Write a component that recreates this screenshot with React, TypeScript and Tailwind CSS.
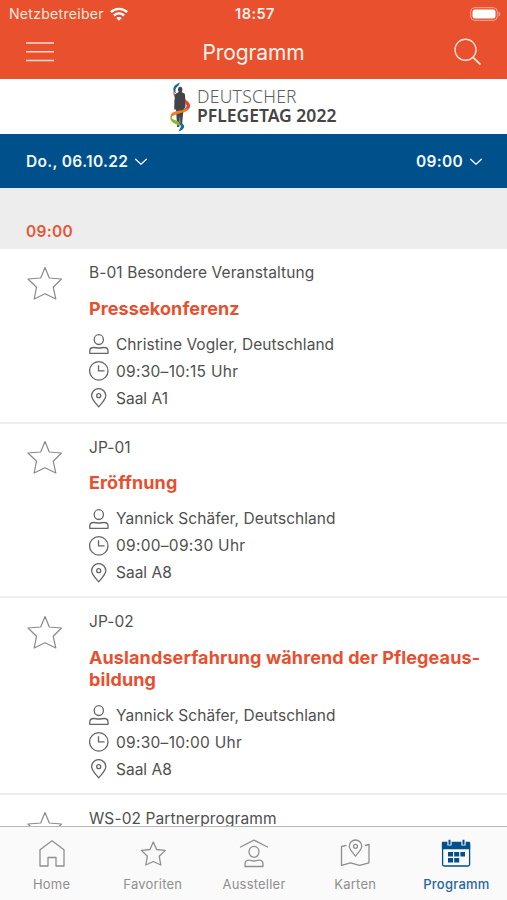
import type { ReactNode } from 'react'

interface Session {
  code: string
  title: string[]
  speaker?: string
  time?: string
  room?: string
}

const SESSIONS: Session[] = [
  {
    code: 'B-01 Besondere Veranstaltung',
    title: ['Pressekonferenz'],
    speaker: 'Christine Vogler, Deutschland',
    time: '09:30–10:15 Uhr',
    room: 'Saal A1'
  },
  {
    code: 'JP-01',
    title: ['Eröffnung'],
    speaker: 'Yannick Schäfer, Deutschland',
    time: '09:00–09:30 Uhr',
    room: 'Saal A8'
  },
  {
    code: 'JP-02',
    title: ['Auslandserfahrung während der Pflegeaus-', 'bildung'],
    speaker: 'Yannick Schäfer, Deutschland',
    time: '09:30–10:00 Uhr',
    room: 'Saal A8'
  },
  { code: 'WS-02 Partnerprogramm', title: [] }
]

function StarIcon() {
  return (
    <svg
      viewBox="0 0 37 37"
      fill="none"
      stroke="currentColor"
      strokeWidth="1.2"
      strokeLinejoin="round"
      className="mt-[3.5px] mr-[26px] size-[37px] shrink-0 text-[#8a8a8a]"
    >
      <path d="M19 2.5 23.3 13 35.5 14 27.2 22.2 29.8 34 19 28.8 8.2 34 10.5 22.2 2 14 14.7 13Z" />
    </svg>
  )
}

function PersonIcon() {
  return (
    <svg viewBox="0 0 20 20" fill="none" stroke="currentColor" strokeWidth="1.3" className="size-5 text-[#666]">
      <ellipse cx="9.8" cy="5.6" rx="4.6" ry="4.9" />
      <path
        d="M.8 19.3v-2.3c0-2.1 1.6-3.5 3.9-3.5 1.800 0 3.100.5 5.200.5s3.400-.5 5.200-.5c2.300 0 3.900 1.400 3.900 3.500v2.300Z"
        strokeLinejoin="round"
      />
    </svg>
  )
}

function ClockIcon() {
  return (
    <svg viewBox="0 0 20 20" fill="none" stroke="currentColor" strokeWidth="1.3" className="size-5 text-[#666]">
      <circle cx="9.8" cy="9.9" r="9.2" />
      <path d="M9.5 4.300V9.900h6" />
    </svg>
  )
}

function PinIcon() {
  return (
    <svg viewBox="0 0 20 20" fill="none" stroke="currentColor" strokeWidth="1.3" className="size-5 text-[#666]">
      <path d="M9.700 18.800C7.200 15.800 2.600 11.300 2.600 7.700a7.100 7.100 0 0 1 14.200 0C16.800 11.300 12.200 15.800 9.700 18.800Z" strokeLinejoin="round" />
      <circle cx="9.700" cy="7.700" r="2" />
    </svg>
  )
}

function Chevron() {
  return (
    <svg viewBox="0 0 12 8" fill="none" stroke="currentColor" strokeWidth="1.3" className="h-2 w-3">
      <path d="m.6 1.3 5.400 4.900 5.400-4.900" strokeLinecap="round" strokeLinejoin="round" />
    </svg>
  )
}

function Detail({ icon, children }: { icon: ReactNode; children: ReactNode }) {
  return (
    <div className="flex h-[27px] items-center gap-[7px]">
      {icon}
      {children}
    </div>
  )
}

function SessionRow({ session }: { session: Session }) {
  return (
    <li className="flex border-b-2 border-[#ededed] pt-3 pb-2.5 pl-[26px] text-[15.5px] text-[#505050]">
      <StarIcon />
      <div>
        <p className="leading-6 tracking-[.1px]">{session.code}</p>
        <h2 className="mt-[12.5px] mb-[11px] text-[18px] leading-[22px] font-bold tracking-[.11px] text-[#e84f2e]">
          {session.title.map((line) => (
            <span key={line} className="block whitespace-nowrap">
              {line}
            </span>
          ))}
        </h2>
        {session.speaker && (
          <Detail icon={<PersonIcon />}>
            <span className="tracking-[.05px]">{session.speaker}</span>
          </Detail>
        )}
        {session.time && (
          <Detail icon={<ClockIcon />}>
            <span className="tracking-[.28px]">{session.time}</span>
          </Detail>
        )}
        {session.room && (
          <Detail icon={<PinIcon />}>
            <span>{session.room}</span>
          </Detail>
        )}
      </div>
    </li>
  )
}

function Logo() {
  return (
    <div className="flex h-[55px] shrink-0 items-center bg-white pl-[168px]">
      <svg viewBox="0 0 24 52" fill="none" className="h-[52px] w-6">
        <path d="M6.500 11.500C3.800 7.500 6 3.800 12 1.500L10.200 5C7.300 7 7 9 8 12Z" fill="#1768a8" />
        <path d="M6.300 8.500c-.5 5 1.700 5.500 3.700 7.500l-1 2.500C6 16.500 4.300 12.500 6.300 8.500Z" fill="#df4937" />
        <ellipse cx="12.200" cy="8.600" rx="2.200" ry="2.900" fill="#424448" />
        <path d="M10.800 11h2.800l3.200 1.800.9 8.200-.5 6.500h-1.300l-.9 6-1 10.500H12.300L12 34l-.7 12H9.200L8.400 34l-.4-5.500H6.200l.2-9 .9-6.500Z" fill="#424448" />
        <path d="M17 18.500c4 2 6 5 4.700 8.200-.9 2-3 3-5 3.800l-1-2c3-1.500 4-3.500 1.300-6.500Z" fill="#e4472d" />
        <path d="M21.500 27c-2.500 5-12.500 5.300-16.700 8-1 .7-1.300 1.800-1 2.800-2-2-1.500-4.300.5-6 4.200-2.800 11.700-1.800 14.700-4.300Z" fill="#f07d22" />
        <path d="M3 34.500c0 4 4.200 4.500 8.200 6.500l2.800 3-3 .5C6 42.500.3 40 3 34.500Z" fill="#8bb52a" />
        <path d="M11.500 41c4.200 2 5.500 3.800 4.200 6-1.200 2-3 3-5.200 3.500l1.500-3c1.500-2 1-3.500-1-5.500Z" fill="#1668a8" />
      </svg>
      <div className="mb-px ml-[5px] flex flex-col font-['Noto_Sans','Open_Sans',sans-serif] text-[17.5px] leading-[19.5px] whitespace-nowrap">
        <span className="font-light tracking-[.28px] text-[#5d5d5d]">DEUTSCHER</span>
        <span className="font-semibold text-[#454545]">PFLEGETAG 2022</span>
      </div>
    </div>
  )
}

function Tab({ label, active = false, children }: { label: string; active?: boolean; children: ReactNode }) {
  return (
    <div className={active ? 'flex flex-1 flex-col items-center text-[#00508c]' : 'flex flex-1 flex-col items-center text-[#8f8f8f]'}>
      <svg viewBox="0 0 30 30" fill="none" stroke="currentColor" strokeWidth="1.3" strokeLinejoin="round" className="mt-3 size-[30px]">
        {children}
      </svg>
      <span
        className={
          active
            ? 'mt-[5px] text-[13px] leading-5 font-medium tracking-[.25px] text-[#2566a0]'
            : 'mt-[5px] text-[13px] leading-5 tracking-[.22px]'
        }
      >
        {label}
      </span>
    </div>
  )
}

function TabBar() {
  return (
    <nav className="flex h-[74px] shrink-0 border-t border-[#b8b8b8] bg-[#fafafa] pl-px">
      <Tab label="Home">
        <path d="M3 10.800 15 1.800l12 9V27h-8v-8.500h-8V27H3Z" />
      </Tab>
      <Tab label="Favoriten">
        <path d="m15.300 3 3.300 7.500 8.700.9-6.100 5.800 1.600 8.800-7.500-3.500-7.500 3.500 1.600-8.800-6.100-5.800 8.700-.9Z" />
      </Tab>
      <Tab label="Aussteller">
        <path d="M1.500 8 15 1.200 28.500 8" strokeLinecap="round" />
        <ellipse cx="15" cy="12.800" rx="5" ry="5.500" />
        <path d="M6 27.500v-2.300c0-2.500 1.500-4 4-4 2 0 3 .8 5 .8s3-.8 5-.8c2.500 0 4 1.500 4 4v2.300Z" />
      </Tab>
      <Tab label="Karten">
        <path d="M15.500 17C13.500 14.500 9.300 10.500 9.300 7.200a6.200 6.200 0 0 1 12.400 0c0 3.300-4.200 7.300-6.200 9.800Z" />
        <circle cx="15.500" cy="7.300" r="2" />
        <path d="M6.500 6.300 1.500 7.500v18.900l9-2.600 9 2.600 9.500-2.600V5.500l-4 1" />
      </Tab>
      <Tab label="Programm" active>
        <rect x="1.600" y="3.600" width="27" height="23.400" rx="1.500" />
        <path d="M1.500 3.500h27V9.500h-27Z" fill="currentColor" />
        <path d="M8.500 0v6.500M22.500 0v6.500" stroke="#fafafa" strokeWidth="4.200" />
        <path d="M8.500.8v5M22.500.8v5" strokeWidth="2" />
        <path d="M7 13h5v4.500H7Zm6.200 0h5v4.500h-5Zm6.200 0h4.600v4.500h-4.600ZM7 19h5v4.500H7Zm6.200 0h5v4.500h-5Z" fill="currentColor" stroke="none" />
      </Tab>
    </nav>
  )
}

export default function App() {
  return (
    <div className="flex h-[900px] w-full flex-col overflow-hidden bg-white font-['Inter',sans-serif]">
      <header className="h-[79px] shrink-0 bg-[#e9502e] text-white">
        <div className="grid h-[27px] grid-cols-[1fr_auto_1fr] items-center pr-[6px] pl-[9px] leading-5">
          <div className="flex items-center gap-[6px] text-[14px] text-[#ffe9df]">
            <span className="tracking-[.3px]">Netzbetreiber</span>
            <svg viewBox="0 0 18 14" className="h-[14px] w-[18px] text-white" fill="none" stroke="currentColor" strokeWidth="2.4">
              <path d="M.8 5.200c4.700-4.500 11.700-4.500 16.400 0M3.900 8.500c3-2.700 7.200-2.700 10.200 0" />
              <path d="M9 13.800 6.200 11c1.600-1.400 4-1.400 5.600 0Z" fill="currentColor" stroke="none" />
            </svg>
          </div>
          <span className="text-[14.5px] font-semibold tracking-[.45px] text-[#fff3ed]">18:57</span>
          <svg viewBox="0 0 31 14" className="h-[14px] w-[31px] justify-self-end">
            <rect x=".7" y=".7" width="26.6" height="12.6" rx="4" fill="none" stroke="#f5aa96" />
            <rect x="2.5" y="2.5" width="23" height="9" rx="2.5" fill="white" />
            <path d="M28.700 4.500c2 .7 2 4.300 0 5Z" fill="#f5aa96" />
          </svg>
        </div>
        <div className="flex h-[50px] items-center justify-between px-[26px]">
          <svg viewBox="0 0 28 20" className="h-5 w-7" stroke="#ffd9cf" strokeWidth="1.5">
            <path d="M0 1h28M0 9.700h28M0 18.500h28" />
          </svg>
          <h1 className="pt-px text-[21px] leading-7 tracking-[-.1px] text-[#fff3ed]">Programm</h1>
          <svg viewBox="0 0 28 28" className="size-7" fill="none" stroke="#ffe3da" strokeWidth="1.4">
            <circle cx="12.500" cy="11.800" r="10.5" />
            <path d="m20 19.300 7.500 7.200" strokeWidth="1.8" />
          </svg>
        </div>
      </header>
      <Logo />
      <div className="flex h-[54px] shrink-0 items-center justify-between bg-[#00508c] pt-px pr-[25px] pl-[26px] text-[15.5px] font-semibold text-[#f2f8ff]">
        <button type="button" className="flex items-center gap-[7px]">
          <span className="tracking-[.34px]">Do., 06.10.22</span>
          <Chevron />
        </button>
        <button type="button" className="flex items-center gap-[7px]">
          <span className="tracking-[.3px]">09:00</span>
          <Chevron />
        </button>
      </div>
      <div className="h-[61px] shrink-0 bg-[#ededed] pt-8 pl-[26px] text-[15.5px] leading-6 font-semibold tracking-[.3px] text-[#e2583a]">
        09:00
      </div>
      <ul className="min-h-0 flex-1 overflow-hidden pt-[.4px]">
        {SESSIONS.map((session) => (
          <SessionRow key={session.code} session={session} />
        ))}
      </ul>
      <TabBar />
    </div>
  )
}
